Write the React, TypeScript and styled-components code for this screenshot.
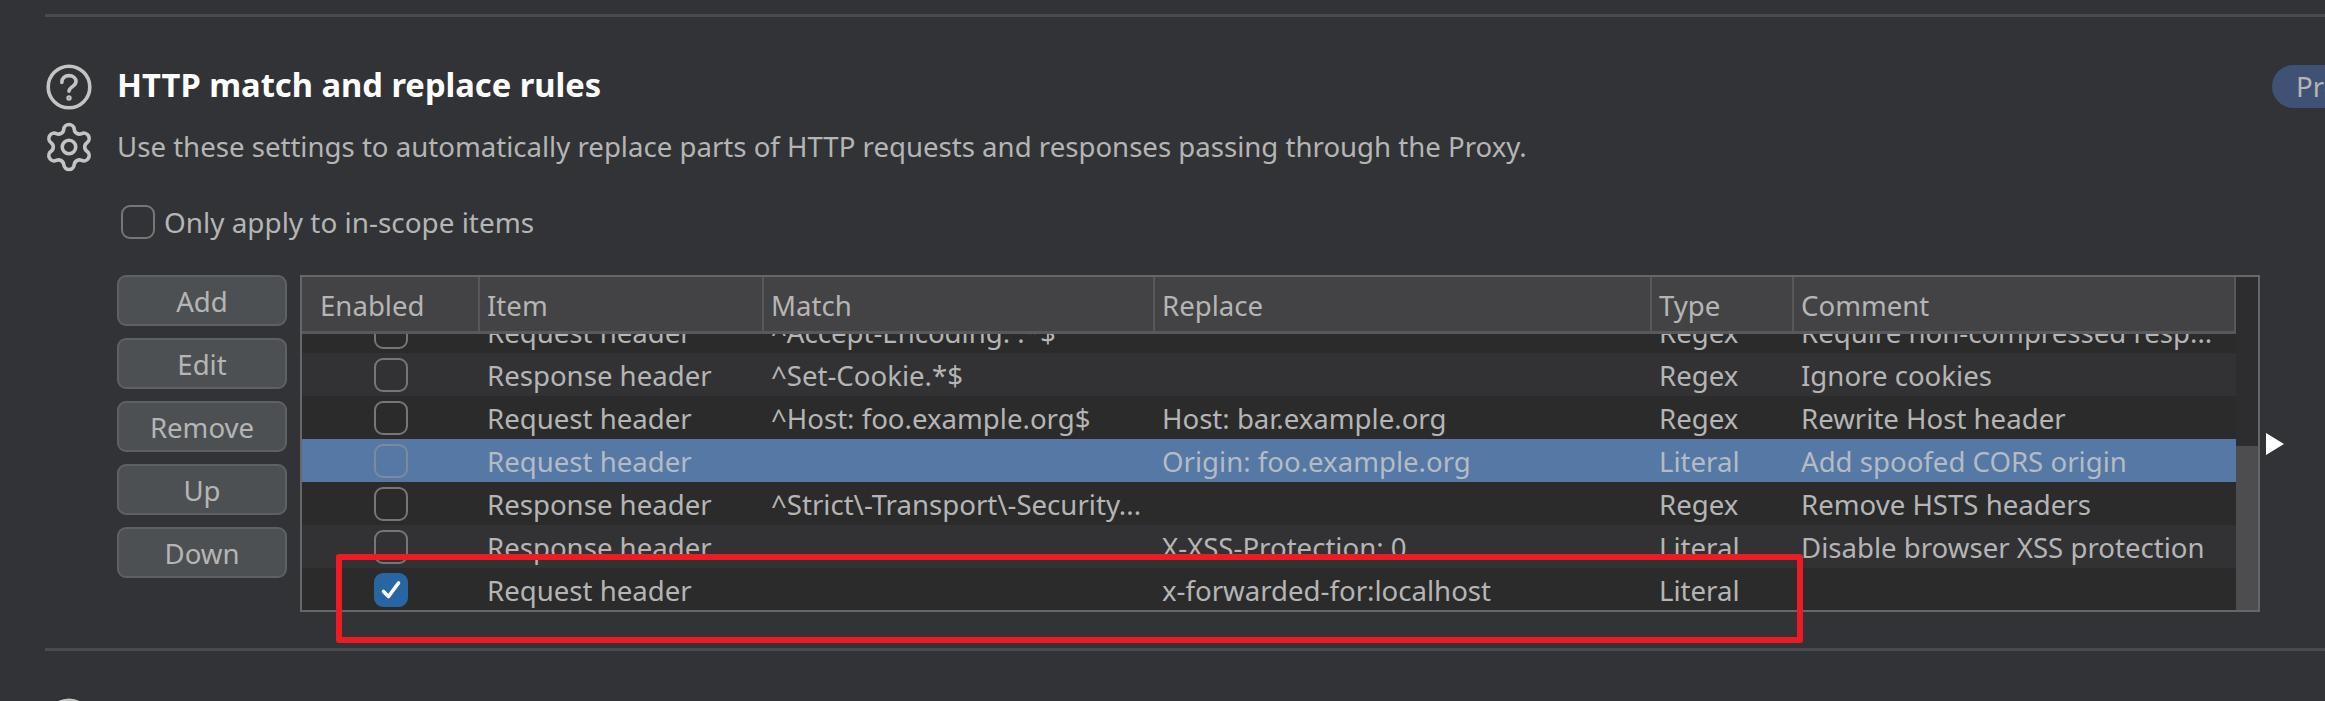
import React from "react";
import styled, { createGlobalStyle } from "styled-components";
import { Settings } from "lucide-react";

const GlobalStyle = createGlobalStyle`
  html, body {
    margin: 0;
    background: #323336;
  }
`;

const Page = styled.div`
  position: relative;
  width: 2325px;
  height: 701px;
  overflow: hidden;
  padding: 14px 0 0 45px;
  box-sizing: border-box;
  font-family: "Noto Sans", "Open Sans", sans-serif;
  color: #b5b5b5;
`;

const Rule = styled.div`
  height: 3px;
  background: #4a4b4d;
`;

const Section = styled.section`
  padding-top: 45px;
  height: 631px;
  box-sizing: border-box;
`;

const HeadingRow = styled.div`
  display: grid;
  grid-template-columns: 72px 1fr 53px;
  align-items: center;
  height: 47px;
`;

const IconSlot = styled.div`
  width: 48px;
  height: 48px;
  display: flex;
  align-items: center;
  justify-content: center;
  flex: none;
`;

const GearIcon = styled(Settings)`
  flex: none;
  width: 54px;
  height: 54px;
  color: #c4c4c4;
`;

const Title = styled.h2`
  margin: 0;
  padding-bottom: 4px;
  font-size: 32.7px;
  font-weight: 700;
  color: #ffffff;
`;

const Pill = styled.div`
  width: 120px;
  height: 43px;
  padding-left: 24px;
  box-sizing: border-box;
  border-radius: 22px;
  background: #3f5273;
  font-size: 27.6px;
  line-height: 43px;
  white-space: nowrap;
`;

const DescriptionRow = styled.div`
  display: grid;
  grid-template-columns: 72px 1fr;
  align-items: center;
  height: 48px;
  margin-top: 14px;
`;

const Description = styled.p`
  margin: 0;
  padding-bottom: 2px;
  font-size: 27.6px;
`;

const ScopeRow = styled.label`
  display: flex;
  align-items: center;
  gap: 9px;
  margin: 34px 0 0 76px;
  height: 34px;
  font-size: 27.9px;
`;

const Box = styled.span<{ $checked?: boolean; $dim?: boolean }>`
  flex: none;
  width: 34px;
  height: 34px;
  box-sizing: border-box;
  border-radius: 9px;
  border: 2px solid ${(p) => (p.$dim ? "#7b8a9f" : "#767676")};
  display: flex;
  align-items: center;
  justify-content: center;
  ${(p) => p.$checked && "background: #2866a3; border-color: #2866a3;"}
`;

const Editor = styled.div`
  display: flex;
  gap: 13px;
  margin: 36px 0 0 72px;
`;

const Buttons = styled.div`
  display: flex;
  flex-direction: column;
  gap: 12px;
`;

const Button = styled.button`
  width: 170px;
  height: 51px;
  padding: 0;
  box-sizing: border-box;
  border: 2px solid #5e6062;
  border-radius: 9px;
  background: #4d5053;
  color: #b5b5b5;
  font-family: inherit;
  font-size: 27.6px;
`;

const TableFrame = styled.div`
  width: 1960px;
  height: 337px;
  box-sizing: border-box;
  border: 2px solid #666769;
  display: grid;
  grid-template-columns: 1fr 22px;
  background: #2d2d2f;
`;

const TableMain = styled.div`
  display: flex;
  flex-direction: column;
  min-width: 0;
  overflow: hidden;
`;

const HeaderRow = styled.div`
  flex: none;
  display: grid;
  grid-template-columns: 176px 284px 391px 497px 142px 1fr;
  height: 57px;
  box-sizing: border-box;
  background: #434345;
  border-bottom: 3px solid #59595b;
  border-right: 2px solid #59595b;
`;

const HeaderCell = styled.div`
  display: flex;
  align-items: center;
  padding: 2px 0 0 18px;
  font-size: 27.6px;
  & + & {
    border-left: 2px solid #59595b;
    padding-left: 7px;
  }
`;

const RowsViewport = styled.div`
  flex: 1;
  overflow: hidden;
`;

const Rows = styled.div`
  margin-top: -24px;
`;

const Row = styled.div<{ $tone: "dark" | "light" | "selected" }>`
  display: grid;
  grid-template-columns: 176px 284px 391px 497px 142px 1fr;
  height: 43px;
  align-items: center;
  font-size: 27.6px;
  white-space: nowrap;
  background: ${(p) =>
    p.$tone === "selected"
      ? "#5578a5"
      : p.$tone === "light"
        ? "#323234"
        : "#2b2b2c"};
  ${(p) => p.$tone === "selected" && "color: #b4bbc4;"}
`;

const Cell = styled.div`
  padding-left: 9px;
  overflow: hidden;
`;

const CheckCell = styled.div`
  display: flex;
  justify-content: center;
  padding-left: 1px;
`;

const ScrollTrack = styled.div`
  display: flex;
  flex-direction: column;
  justify-content: flex-end;
  background: #2d2d2f;
`;

const ScrollThumb = styled.div`
  height: 164px;
  background: #4d4d4f;
`;

const ScrollArrow = styled.svg`
  position: absolute;
  left: 2266px;
  top: 433px;
`;

const BottomIcon = styled.div`
  width: 48px;
  height: 48px;
  margin-top: 46px;
  display: flex;
  align-items: center;
  justify-content: center;
`;

const Highlight = styled.div`
  position: absolute;
  left: 336px;
  top: 554px;
  width: 1467px;
  height: 89px;
  box-sizing: border-box;
  border: 6px solid #ed1c24;
  border-radius: 3px;
`;

const HelpIcon = () => (
  <svg width="48" height="48" viewBox="0 0 48 48" fill="none" stroke="#c4c4c4" strokeWidth="3.6" strokeLinecap="round" strokeLinejoin="round">
    <circle cx="24" cy="24" r="20.8" />
    <path d="M16.8 19.4c0-4.2 3.2-6.8 7.2-6.8s7 2.6 7 6c0 5-7 5-7 9.6" />
    <circle cx="24" cy="35" r="0.9" fill="#c4c4c4" />
  </svg>
);

type RuleRow = {
  tone: "dark" | "light" | "selected";
  checked?: boolean;
  item: string;
  match: string;
  replace: string;
  type: string;
  comment: string;
};

const rules: RuleRow[] = [
  { tone: "dark", item: "Request header", match: "^Accept-Encoding: .*$", replace: "", type: "Regex", comment: "Require non-compressed resp..." },
  { tone: "light", item: "Response header", match: "^Set-Cookie.*$", replace: "", type: "Regex", comment: "Ignore cookies" },
  { tone: "dark", item: "Request header", match: "^Host: foo.example.org$", replace: "Host: bar.example.org", type: "Regex", comment: "Rewrite Host header" },
  { tone: "selected", item: "Request header", match: "", replace: "Origin: foo.example.org", type: "Literal", comment: "Add spoofed CORS origin" },
  { tone: "dark", item: "Response header", match: "^Strict\\-Transport\\-Security...", replace: "", type: "Regex", comment: "Remove HSTS headers" },
  { tone: "light", item: "Response header", match: "", replace: "X-XSS-Protection: 0", type: "Literal", comment: "Disable browser XSS protection" },
  { tone: "dark", checked: true, item: "Request header", match: "", replace: "x-forwarded-for:localhost", type: "Literal", comment: "" },
];

const columns = ["Enabled", "Item", "Match", "Replace", "Type", "Comment"];
const actions = ["Add", "Edit", "Remove", "Up", "Down"];

export default function App() {
  return (
    <Page>
      <GlobalStyle />
      <Rule />
      <Section>
        <HeadingRow>
          <IconSlot>
            <HelpIcon />
          </IconSlot>
          <Title>HTTP match and replace rules</Title>
          <Pill>Pro</Pill>
        </HeadingRow>
        <DescriptionRow>
          <IconSlot>
            <GearIcon strokeWidth={1.6} />
          </IconSlot>
          <Description>
            Use these settings to automatically replace parts of HTTP requests and responses passing through the Proxy.
          </Description>
        </DescriptionRow>
        <ScopeRow>
          <Box />
          Only apply to in-scope items
        </ScopeRow>
        <Editor>
          <Buttons>
            {actions.map((a) => (
              <Button key={a}>{a}</Button>
            ))}
          </Buttons>
          <TableFrame>
            <TableMain>
              <HeaderRow>
                {columns.map((c) => (
                  <HeaderCell key={c}>{c}</HeaderCell>
                ))}
              </HeaderRow>
              <RowsViewport>
                <Rows>
                  {rules.map((r, i) => (
                    <Row key={i} $tone={r.tone}>
                      <CheckCell>
                        <Box $checked={r.checked} $dim={r.tone === "selected"}>
                          {r.checked && (
                            <svg width="24" height="24" viewBox="0 0 24 24" fill="none" stroke="#ffffff" strokeWidth="3.6" strokeLinecap="round" strokeLinejoin="round">
                              <path d="M4.5 13.5l5 5L19.5 5" />
                            </svg>
                          )}
                        </Box>
                      </CheckCell>
                      <Cell>{r.item}</Cell>
                      <Cell>{r.match}</Cell>
                      <Cell>{r.replace}</Cell>
                      <Cell>{r.type}</Cell>
                      <Cell>{r.comment}</Cell>
                    </Row>
                  ))}
                </Rows>
              </RowsViewport>
            </TableMain>
            <ScrollTrack>
              <ScrollThumb />
            </ScrollTrack>
          </TableFrame>
        </Editor>
      </Section>
      <Rule />
      <BottomIcon>
        <HelpIcon />
      </BottomIcon>
      <ScrollArrow width="18" height="22" viewBox="0 0 18 22">
        <path d="M0 0L18 11L0 22z" fill="#ffffff" />
      </ScrollArrow>
      <Highlight />
    </Page>
  );
}
